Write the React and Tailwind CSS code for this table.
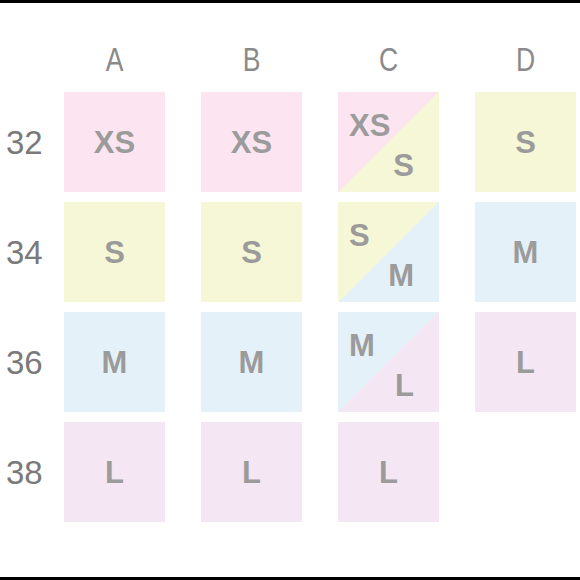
import React from 'react';

const cols = ['A', 'B', 'C', 'D'];

const rows = [
  { size: '32', cells: [
    { label: 'XS', bg: 'bg-[#fce5f0]' },
    { label: 'XS', bg: 'bg-[#fce5f0]' },
    { split: ['XS', 'S'], bg: 'bg-[linear-gradient(to_bottom_right,#fce5f0_50%,#f6f7d6_50%)]' },
    { label: 'S', bg: 'bg-[#f6f7d6]' },
  ] },
  { size: '34', cells: [
    { label: 'S', bg: 'bg-[#f6f7d6]' },
    { label: 'S', bg: 'bg-[#f6f7d6]' },
    { split: ['S', 'M'], bg: 'bg-[linear-gradient(to_bottom_right,#f6f7d6_50%,#e4f1f8_50%)]' },
    { label: 'M', bg: 'bg-[#e4f1f8]' },
  ] },
  { size: '36', cells: [
    { label: 'M', bg: 'bg-[#e4f1f8]' },
    { label: 'M', bg: 'bg-[#e4f1f8]' },
    { split: ['M', 'L'], bg: 'bg-[linear-gradient(to_bottom_right,#e4f1f8_50%,#f4e7f3_50%)]' },
    { label: 'L', bg: 'bg-[#f4e7f3]' },
  ] },
  { size: '38', cells: [
    { label: 'L', bg: 'bg-[#f4e7f3]' },
    { label: 'L', bg: 'bg-[#f4e7f3]' },
    { label: 'L', bg: 'bg-[#f4e7f3]' },
    null,
  ] },
];

const Cell = ({ cell }) => {
  if (!cell) return <div className="h-[100px]" />;

  if (cell.split) {
    return (
      <div className={`h-[100px] flex flex-col justify-between pl-[11px] pr-[25px] pt-[18px] pb-[11px] ${cell.bg}`}>
        <span className="self-start leading-none">{cell.split[0]}</span>
        <span className="self-end leading-none">{cell.split[1]}</span>
      </div>
    );
  }

  return (
    <div className={`h-[100px] flex items-center justify-center ${cell.bg}`}>
      <span className="leading-none">{cell.label}</span>
    </div>
  );
};

export default function App() {
  return (
    <div className="w-[580px] h-[580px] bg-white flex flex-col border-t-[3px] border-b-[3px] border-black font-['Liberation_Sans',Arial,sans-serif]">
      {/* Column headers */}
      <div className="flex h-[89px] items-end pb-[16px]">
        <div className="w-[64px] shrink-0" />
        <div className="grid grid-cols-[101px_101px_101px_101px] gap-x-[36px]">
          {cols.map((c) => (
            <div key={c} className="text-center text-[34px] leading-none text-[#8a8a8a] scale-x-[0.78]">
              {c}
            </div>
          ))}
        </div>
      </div>

      {/* Rows */}
      <div className="flex flex-col gap-[10px]">
        {rows.map((row) => (
          <div key={row.size} className="flex">
            <div className="w-[64px] shrink-0 flex items-center pl-[6px] text-[33px] text-[#7a7a7a] leading-none">
              {row.size}
            </div>
            <div className="grid grid-cols-[101px_101px_101px_101px] gap-x-[36px] text-[31px] font-bold text-[#9b9b9b]">
              {row.cells.map((cell, i) => (
                <Cell key={i} cell={cell} />
              ))}
            </div>
          </div>
        ))}
      </div>
    </div>
  );
}
